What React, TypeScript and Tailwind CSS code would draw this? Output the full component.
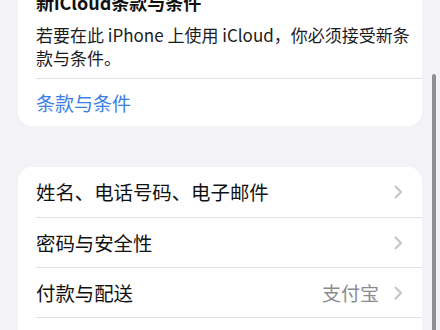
import React from "react";

const font = { fontFamily: '"Noto Sans CJK SC", "Noto Sans", sans-serif' };

function Chevron() {
  return (
    <svg width="9" height="14" viewBox="0 0 9 14" className="shrink-0">
      <path d="M1.5 1.5 L7 7 L1.5 12.5" fill="none" stroke="#c4c4c7" strokeWidth="2" strokeLinecap="round" strokeLinejoin="round" />
    </svg>
  );
}

function Row({ label, value, last, first }: { label: string; value?: string; last?: boolean; first?: boolean }) {
  return (
    <div className="pl-[18px]">
      <div className={`flex items-center ${first ? "h-[51px]" : "h-[50px]"} pr-[19px] ${last ? "" : "border-b border-[#e2e2e6]"}`}>
        <span className="flex-1 text-[19.4px] text-[#111] leading-none">{label}</span>
        {value && <span className="text-[19px] text-[#8a8a8e] leading-none mr-[15px]">{value}</span>}
        {label && <Chevron />}
      </div>
    </div>
  );
}

export default function App() {
  return (
    <div className="relative w-[440px] h-[330px] overflow-hidden bg-[#f2f2f7]" style={font}>
      <div className="mx-[18px] -mt-[24px] bg-white rounded-[14px]">
        <div className="pl-[18px] pr-[18px] pt-[14px]">
          <div className="text-[18px] font-bold leading-[24px] text-[#111]">新iCloud条款与条件</div>
          <div className="mt-[9px] text-[17px] leading-[23px] text-[#1c1c1e] whitespace-nowrap">
            <div>若要在此 iPhone 上使用 iCloud，你必须接受新条</div>
            <div>款与条件。</div>
          </div>
        </div>
        <div className="pl-[18px] mt-[9px]">
          <div className="border-t border-[#e2e2e6]" />
        </div>
        <div className="pl-[18px] h-[47px] flex items-center">
          <span className="text-[19px] leading-none text-[#3a7ee6]">条款与条件</span>
        </div>
      </div>

      <div className="mx-[18px] mt-[41px] bg-white rounded-[14px]">
        <Row label="姓名、电话号码、电子邮件" first />
        <Row label="密码与安全性" />
        <Row label="付款与配送" value="支付宝" />
        <Row label="" last />
      </div>

      <div className="absolute left-[432px] top-[74px] w-[4px] h-[300px] rounded-full bg-[#8e8e93]" />
    </div>
  );
}
